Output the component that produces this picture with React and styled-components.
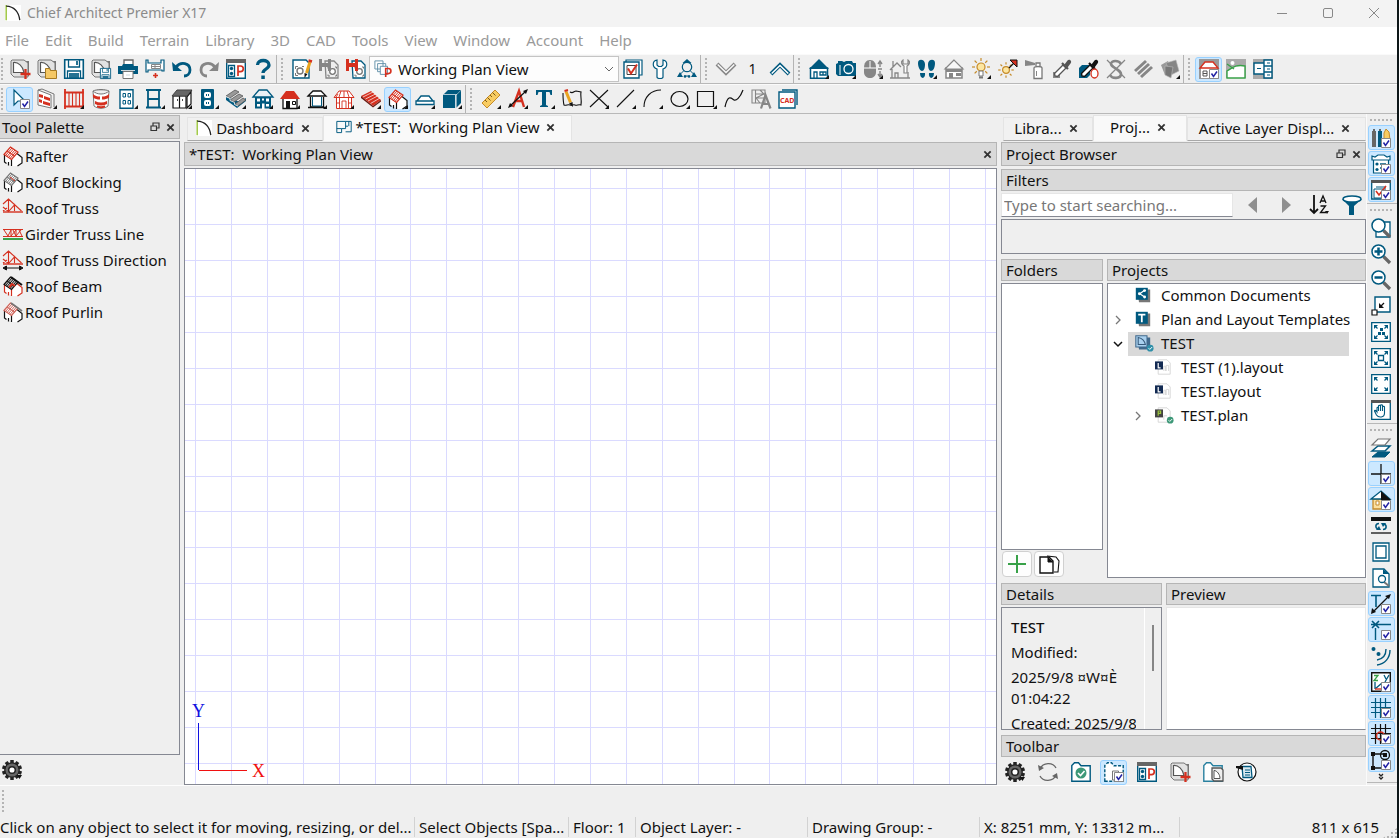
import React from "react";
import styled, { createGlobalStyle, css } from "styled-components";

const C = {
  face: "#efefef",
  head: "#d9d9d9",
  headLine: "#b5b5b5",
  line: "#858892",
  blue: "#00597f",
  red: "#d5301f",
  gray: "#868686",
  ink: "#111111",
  green: "#38a148",
  active: "#cce8ff",
  activeLine: "#99d1ff",
};

const Global = createGlobalStyle`
  * { box-sizing: border-box; }
  body { margin: 0; }
  body, button, input, select {
    font-family: "Noto Sans", "Open Sans", sans-serif;
    font-size: 15px;
    line-height: 20px;
    color: #111;
  }
  button { padding: 0; border: 0; background: none; }
  h2, p, ul { margin: 0; padding: 0; font-weight: 400; font-size: 15px; }
  ul { list-style: none; }
`;

/* ---------- icons (20 x 20 grid) ---------- */

const B = C.blue, R = C.red, G = C.gray, K = C.ink;

const House = ({ roof, wall, fill = "#fff" }) => (
  <>
    <path d="M3 9v10.500h14V9" fill={fill} stroke={wall} strokeWidth="1.300" />
    <path d="M0 10 6 2h8l6 8z" fill={roof} />
  </>
);
const RoofFrame = ({ c = R, k = K, fill = "#fff" }) => (
  <>
    <path d="M1.500 9v6.500l7 4V13zM9 13l4.500-6L19 11v6l-5 3H9z" fill="#fff" />
    <path d="M1.500 9v7l2 1.500M8.500 13v7M14 7.500l5 4V17l-4.500 3M5.500 16v3.500" fill="none" stroke={k} strokeWidth="1.200" />
    <path d="M1 8.500 7.500 1 15 6 8.500 13.500z" fill={fill} stroke={c} strokeWidth="1.200" />
    <path d="M2.500 9.500 9 2M4 10.500 10.500 3M5.500 11.500 12 4M7 12.500 13.500 5M4 5l7.500 5" stroke={c} />
  </>
);
const Page = ({ light = "#e2e2e2" }) => (
  <>
    <path d="M4 2h15v15H5z" fill="#777" />
    <path d="M2 1h12l4 3v14H4l-3-3V2z" fill={light} stroke="#777" />
    <path d="M3.500 13.500v-10C8 3 13 7 14 13.500z" fill="#fff" stroke="#555" strokeWidth="1.200" />
  </>
);
const Disk = ({ x = 0, y = 0, s = 1 }) => (
  <g transform={`translate(${x} ${y}) scale(${s})`}>
    <path d="M.7.7h18.600v18.600H.7z" fill="#fff" stroke={B} strokeWidth="1.600" />
    <path d="M4.500 1v7h11V1M3.500 19v-7h13v7" fill="none" stroke={B} strokeWidth="1.300" />
    <path d="M12 2h2v4h-2zM5 14h10v5H5z" fill={B} opacity=".85" />
  </g>
);
const MiniDisk = ({ c }) => (
  <path d="M0 0h3v4h6V0h3v12H9V8H3v4H0z" fill={c} />
);
const MiniGear = () => (
  <>
    <circle cx="13.500" cy="12.500" r="2.800" fill="#fff" stroke="#777" strokeWidth="1.300" />
    <path d="M9 9.500V8h2M16 8h1.500v1.500M9 15.500V17h2M16 17h1.500v-1.500" fill="none" stroke="#777" />
  </>
);
const Folder = ({ c = "#f5c865", s = "#a67a22" }) => (
  <path d="M8.500 9.500h4l1 2h6v8h-11z" fill={c} stroke={s} />
);
const Lens = ({ children }) => (
  <>
    <path d="M12.500 12.500 19 19" stroke="#666" strokeWidth="3.200" />
    <circle cx="7.500" cy="7.500" r="6.500" fill="#fff" stroke={B} strokeWidth="1.500" />
    {children}
  </>
);
const Corners = () => (
  <>
    <path d="M.7.7h18.600v18.600H.7z" fill="#fff" stroke={B} strokeWidth="1.300" />
    <path d="M3 3h4L3 7zM17 3h-4l4 4zM3 17h4l-4-4zM17 17h-4l4-4z" fill={B} />
    <path d="M4 4l2.500 2.500M16 4l-2.500 2.500M4 16l2.500-2.500M16 16l-2.500-2.500" stroke={B} strokeWidth="1.200" />
  </>
);
const Dropper = ({ c = "#555" }) => (
  <>
    <path d="M3 17l-.5-2.500L11 6l3 3-8.500 8.500z" fill="#fff" stroke={c} strokeWidth="1.300" />
    <path d="M10 4l6 6" stroke={c} strokeWidth="2.200" />
    <path d="M12.500 5.500l3-4c2-2 5 1 3 3l-3 4z" fill={c} />
  </>
);
const PBox = () => (
  <>
    <path d="M.7.7h18.600v18.600H.7z" fill="#fff" stroke={B} strokeWidth="1.400" />
    <path d="M0 0h20v4H0z" fill="#666" />
    <path d="M2.500 6.500h6v11h-6z" fill="#fff" stroke={B} strokeWidth="1.300" />
    <circle cx="5.500" cy="9.500" r="1.700" fill={B} /><circle cx="5.500" cy="14.500" r="1.700" fill={B} />
    <path d="M12 17V7h2.500a2.800 2.800 0 0 1 0 5.600H12" fill="none" stroke={R} strokeWidth="1.700" />
  </>
);
const Sun = ({ cx = 10, cy = 9, r = 4 }) => (
  <>
    <g stroke="#c58b2a" strokeWidth="1.200">
      {[0, 45, 90, 135, 180, 225, 270, 315].map((a) => (
        <path key={a} d={`M${cx + r + 2} ${cy}h${r - 1}`} transform={`rotate(${a} ${cx} ${cy})`} />
      ))}
    </g>
    <circle cx={cx} cy={cy} r={r} fill="#fde6a0" stroke="#c58b2a" strokeWidth="1.200" />
  </>
);
const Truss = ({ dir }) => (
  <>
    <path d="M0 6 5.500 1l13 12M5.500 1v12M0 9l5.500 4.500 6-6.500v6M0 13l4-3" fill="none" stroke={R} strokeWidth="1.100" />
    <path d="M0 14h20" stroke={R} strokeWidth="1.400" />
    {dir && <path d="M2 18h16M0 18l3.500-2v4zM20 18l-3.500-2v4z" stroke={K} fill={K} strokeWidth="1" />}
  </>
);
const Grid = ({ c }) => (
  <path d="M4.500 0v20M9.500 0v20M14.500 0v20M0 4.500h20M0 9.500h20M0 14.500h20" stroke={c} strokeWidth="1.200" />
);
const Gear = () => (
  <>
    <g stroke="#222" strokeWidth="3.500">
      {[0, 36, 72, 108, 144].map((a) => <path key={a} d="M10 0v20" transform={`rotate(${a} 10 10)`} />)}
    </g>
    <circle cx="10" cy="10" r="7.200" fill="#666" stroke="#222" strokeWidth="1.300" />
    <circle cx="10" cy="10" r="3.300" fill="#fff" stroke="#222" strokeWidth="1.500" />
    <path d="M15 15h5l-2.500 4z" fill="#111" />
  </>
);
const ProjFolder = ({ dash, c = B }) => (
  <path d="M.8 19.200V3.500L3.500.8h4l2.500 3h9.200v15.400z" fill="#fff" stroke={c} strokeWidth="1.400" strokeDasharray={dash ? "3 1.500" : undefined} />
);

const ICONS = {
  logo: <><path d="M0 0h20v20H0z" fill="#fff" /><path d="M1.500 0v19" stroke="#9bc53d" strokeWidth="1.800" /><path d="M1.500 1.500C11 2 17 8 18.500 19" fill="none" stroke="#222" strokeWidth="1.600" /></>,
  newPlan: <><Page /><path d="M15.500 10v10M10.500 15h10" stroke={R} strokeWidth="2.300" /></>,
  open: <><Page /><Folder /></>,
  save: <Disk />,
  saveAs: <><Page /><Disk x={9} y={9} s={0.55} /></>,
  print: <><path d="M6 6V1h9v5" fill="#fff" stroke="#666" strokeWidth="1.300" /><path d="M0 7h4l1-2h10l1 2h4v8H0z" fill={B} /><path d="M5 12.500h10v7H5z" fill="#fff" stroke="#777" /><path d="M3 11.500h14M8 16h4" stroke="#ccd8de" /></>,
  sendLayout: <><path d="M1 1h2v3h13V1h3v11h-2v-1H3v2H1z" fill="#fff" stroke={B} strokeWidth="1.200" /><path d="M6.500 5.500h9v4h-9zM10 5.500v4M6.500 7.500h9" fill="none" stroke={G} /><path d="M10.500 14v5M8 16.500h5" stroke={R} strokeWidth="1.600" /></>,
  undo: <><path d="M4 8C9 2 18 4 18 11c0 4-3 6-6 6" fill="none" stroke={B} strokeWidth="2.800" /><path d="M0 3l1 9h9z" fill={B} /></>,
  redo: <><path d="M16 8C11 2 2 4 2 11c0 4 3 6 6 6" fill="none" stroke={G} strokeWidth="2.800" /><path d="M20 3l-1 9h-9z" fill={G} /></>,
  pBox: <PBox />,
  help: <><path d="M4.500 6C4.500 0 16 0 16 6c0 4-6 4-6 8" fill="none" stroke={B} strokeWidth="3.300" /><path d="M8.300 16.500h3.500V20H8.300z" fill={B} /></>,
  pencilGear: <><path d="M1 1h13l3 3v15H1z" fill="#fff" stroke={B} strokeWidth="1.400" /><circle cx="8" cy="12" r="3" fill="none" stroke="#777" strokeWidth="1.400" /><path d="M3.500 10V7.500H6M3.500 14v2.500H6M10 7.500h2" stroke="#777" fill="none" /><path d="M18 3 14.500 14" stroke="#e9a41f" strokeWidth="3" /><path d="M12.500 14l3 1-3 4z" fill={K} /><path d="M16.500 1.500l3.500 1" stroke={R} strokeWidth="2.600" /></>,
  saveGear: <><path d="M6 2h9l4 4v13H7z" fill="#eee" stroke={G} strokeWidth="1.300" /><MiniGear /><MiniDisk c={G} /></>,
  saveGearRed: <><path d="M6 2h9l4 4v13H7z" fill="#fff" stroke={B} strokeWidth="1.300" /><MiniGear /><MiniDisk c={R} /></>,
  views: <><path d="M1 1h9v9H1zM4 4h9v9H4z" fill="#fff" stroke="#5b8ca6" /><path d="M7 7h8v9H7z" fill="#fff" stroke="#5b8ca6" /><path d="M13 19V9.500h3a2.800 2.800 0 0 1 0 5.600h-3" fill="none" stroke={R} strokeWidth="1.800" /></>,
  checkBox: <><path d="M3 1h16v15H3z" fill="#fff" stroke={B} strokeWidth="1.200" /><path d="M1 3h15v16H1z" fill="#fff" stroke={B} strokeWidth="1.400" /><path d="M4 6.500h9v9H4z" fill="none" stroke="#444" /><path d="M5 9.500l3 5 6-9" fill="none" stroke={R} strokeWidth="2" /></>,
  wrench: <path d="M7 1C2 2 2 8 7 10v8c0 2 6 2 6 0v-8c5-2 5-8 0-9v5l-1.500 1.500h-3L7 6z" fill="#fff" stroke={B} strokeWidth="1.200" />,
  network: <><circle cx="10" cy="8" r="4.700" fill="none" stroke={B} strokeWidth="1.200" /><path d="M10 0l4.500 4h-9z" fill={B} /><path d="M6.500 12l-3 3M13.500 12l3 3M7 17h6" stroke={B} /><path d="M3 13l3 5H0zM17 13l3 5h-6z" fill={B} /><circle cx="8" cy="17.500" r="1.300" fill={B} /><circle cx="12" cy="17.500" r="1.300" fill={B} /></>,
  chevDown: <><path d="M1 5l9 9 9-9" stroke={G} strokeWidth="4" fill="none" /><path d="M1.700 5.500 10 13.500l8.300-8" stroke="#f8f8f8" strokeWidth="1.500" fill="none" /></>,
  chevUp: <><path d="M1 15l9-9 9 9" stroke={B} strokeWidth="4" fill="none" /><path d="M1.700 14.500 10 6.500l8.300 8" stroke="#fff" strokeWidth="1.500" fill="none" /></>,
  camHouse: <><path d="M1.500 9h17v10.300h-17z" fill="#fff" stroke={B} strokeWidth="1.500" /><path d="M0 10 10 0l10 10z" fill={B} /><path d="M5 19v-6h3v6M11 13h6v3h-6zM14 13v3" fill="none" stroke={B} strokeWidth="1.300" /></>,
  camera: <><path d="M0 5l2-1V2h4l2 1 2-1h6l1 2h3v13H2l-2-2z" fill={B} /><circle cx="12.500" cy="10" r="4.500" fill={B} stroke="#fff" strokeWidth="1.300" /><path d="M4 6v10" stroke="#fff" /></>,
  mouse: <><path d="M1 9C1 4 3 1 7 1s6 3 6 8v4c0 8-12 8-12 0z" fill={G} /><path d="M1 9h12M7 2v7" stroke="#fff" /><path d="M17 3v5M17 12v5M15 5l2-3 2 3M15 15l2 3 2-3M15 10h4" fill="none" stroke={G} strokeWidth="1.400" /></>,
  houseTool: <><path d="M2 10v9h16v-6M0 11l7-7 4 4M5 19v-5h3v5M3 2v6M0 19h20" fill="none" stroke={G} strokeWidth="1.300" /><path d="M13 1c-3 2-1 5 1 6v7h3V7c2-1 4-4 1-6v4h-5z" fill="#fff" stroke={G} strokeWidth="1.200" /></>,
  feet: <path d="M1 4C1-1 8 0 8 5c0 4-1 7-3 7S1 8 1 4zM11 5c0-5 7-6 7-1s-2 8-4 8-3-3-3-7zM3 14h5c1 6-5 7-5 0zM12 14h5c0 7-6 6-5 0z" fill={B} />,
  grayHouse: <><path d="M2 9h16v10H2z" fill="#fff" stroke={G} strokeWidth="1.500" /><path d="M10 1 1 10h18z" fill="#f8f8f8" stroke={G} strokeWidth="1.200" /><path d="M2 10h16v3H2zM5 14h4v5H5zM12 14h5v3h-5z" fill={G} /></>,
  bulb: <><Sun cy={8} /><path d="M8 12h4v5H8z" fill="#fff" stroke="#777" /><path d="M8 18.500h4" stroke="#777" strokeWidth="2" /></>,
  sunArrow: <><Sun cx={8} cy={11} r={3.4} /><path d="M11 9 16 4" stroke={K} strokeWidth="1.300" /><path d="M12 1h7v7z" fill={R} stroke={K} /></>,
  spray: <><path d="M9 9c0-2 8-2 8 0v10.500H9zM11 7V4h4v3" fill="#fff" stroke="#777" strokeWidth="1.300" /><path d="M11.500 12v5" stroke={G} /><path d="M0 1l10 3v2L0 7z" fill={G} /></>,
  dropper: <><path d="M1 13h7v6H1z" fill={G} /><Dropper /></>,
  dropperBlue: <><path d="M0 9l3-3h8v10l-3 3H0z" fill={B} /><Dropper c={K} /><ellipse cx="15.500" cy="14.500" rx="3.500" ry="4.500" fill="#fff" stroke={R} strokeWidth="1.300" /></>,
  noSpray: <><path d="M15 5C13 1 5 1 5 5s10 5 10 10-9 5-11 1" fill="none" stroke={G} strokeWidth="2.600" /><path d="M1 1l18 18M19 1 1 19" stroke={G} strokeWidth="1.200" /></>,
  planks: <path d="M1 11 12 1l2 2L3 13zM4 14 15 4l2 2L6 16zM7 17 18 7l2 2L9 19z" fill={G} />,
  cards: <><path d="M1 6l7-4 3 10-6 4z" fill="#999" /><path d="M6 4l10-3 3 11-8 4z" fill={G} stroke="#bbb" strokeWidth=".6" /><path d="M5 7l8 1-2 11-6-3z" fill="#777" stroke="#bbb" strokeWidth=".6" /></>,
  house3d: <><path d="M0 0h20v20H0z" fill="#999" /><path d="M2 9h16v10H2z" fill="#fff" /><path d="M6 3h8l5 6H1z" fill="#fff" stroke={R} strokeWidth="1.400" /><path d="M4 12h4v5H4zM4 14.500h4" fill="none" stroke="#555" /></>,
  landscape: <><path d="M0 0h20v19H0z" fill="#aaa" /><circle cx="6.500" cy="4" r="2" fill="#fff" /><path d="M1 12C6 9 10 5 19 7v12H1z" fill="#fff" stroke={C.green} strokeWidth="1.400" /><path d="M1 5l7 5" stroke={C.green} strokeWidth="1.300" /></>,
  panels: <><path d="M0 0h20v20H0z" fill="#aaa" /><path d="M1 4h10v11H1zM11 1h8v18h-8zM11 7h8M11 13h8" fill="#fff" stroke={B} strokeWidth="1.400" /><path d="M4 9.500h4M14 4h3M14 10h3M14 16h3" stroke={B} strokeWidth="1.200" /></>,

  pointer: <path d="M4 1v15l4-4h7z" fill="#fff" stroke={B} strokeWidth="1.200" />,
  brick: <><path d="M1 1l13 5v13L1 16z" fill="#fff" stroke="#777" /><path d="M2 5l4 1v3L2 8zM7 7l6 2v3L7 10zM2 10l3 1v3l-3-1zM6 12l7 2v3l-7-2z" fill={R} /><path d="M1 1l4-1 12 5v13" fill="none" stroke="#777" /></>,
  fence: <><path d="M0 3.500h20M0 17.500h20M1 0v20M19 0v20" stroke={R} strokeWidth="1.800" /><path d="M5 4v13M8.500 4v13M12 4v13M15.500 4v13" stroke={R} strokeWidth="1.100" /></>,
  curveWall: <><path d="M2 2c4 4 12 4 16 0l-1 15c-4 3-10 3-14 0z" fill="#fff" stroke="#777" /><path d="M2 5c2 2 4 2.500 7 2.500v3c-3 0-5-.5-7-2zM11 7.500c3 0 5-.5 7-2.500v3.500c-2 1.500-4 2-7 2zM4 12c4 2 8 2 12 0v3c-4 2-8 2-12 0z" fill={R} /><path d="M6 16.500c3 1 5 1 8 0v2c-3 1-5 1-8 0z" fill={R} /><path d="M2 2c4-2 12-2 16 0" stroke="#777" fill="#ccc" /></>,
  door: <><path d="M2 .7h13v18.600H2z" fill="#fff" stroke={B} strokeWidth="1.400" /><path d="M5 4.500h2.500V8H5zM10 4.500h2.500V8H10zM5 11.500h2.500V15H5zM10 11.500h2.500V15H10z" fill="none" stroke={B} /></>,
  window: <path d="M1 1h15M3 10h11M1 18.500h15M3 1v18M14 1v18" stroke={B} strokeWidth="1.800" fill="none" />,
  cabinet: <><path d="M1 7h13v12H1zM7.500 7v12" fill="#fff" stroke={K} strokeWidth="1.200" /><path d="M0 7l5-6h15l-5 6z" fill="#666" stroke="#444" /><path d="M15 8l4-5v12l-4 4z" fill="#fff" stroke={K} strokeWidth="1.200" /><path d="M5 11h1M10 11h1" stroke={K} strokeWidth="1.300" /></>,
  outlet: <><rect x="2" y="0" width="13" height="20" rx="1" fill={B} /><rect x="5" y="3" width="7" height="6" rx="2" fill="#fff" /><rect x="5" y="11" width="7" height="6" rx="2" fill="#fff" /><path d="M7.500 5v2M9.500 5v2M7.500 13v2M9.500 13v2" stroke={B} /></>,
  stairs: <><path d="M0 8v3l11 8 9-7V9l-6 4z" fill={B} /><path d="M0 7 9 1l4 2-9 6zM4 11l9-6 4 2-9 6zM9 15l8-6 3 2-8 6z" fill="#999" stroke="#555" strokeWidth=".8" /><path d="M0 7.500l4 2v2l4.500 2v2L12 17" stroke="#fff" fill="none" strokeWidth=".8" /></>,
  home1: <><path d="M2 7h16v12.500H2z" fill={B} /><path d="M0 8 6 1h8l6 7z" fill="#e9f1f5" stroke={B} strokeWidth="1.300" /><path d="M4 9.500h3v3H4zM13 9.500h3v3h-3zM4 15h3v2.500H4zM13 15h3v2.500h-3zM9 14.500h2.500V20H9zM9 9.500h2v2H9z" fill="#fff" /></>,
  home2: <><House roof={R} wall={K} /><path d="M6 12h4v7H6z" fill={K} /><path d="M12.500 12.500h3v3h-3z" fill="none" stroke={K} /></>,
  home3: <><path d="M3.500 8v10h13V8" fill="#fff" stroke={K} strokeWidth="1.300" /><path d="M1 7l5-5h8l5 5z" fill="#fff" stroke={K} strokeWidth="1.300" /><path d="M5.500 8v9h9V8" fill="none" stroke={B} /><path d="M1 18.500h17" stroke={K} strokeWidth="1.500" /></>,
  home4: <><path d="M2.500 8.500h15v11h-15zM0 8.500l5-6.500h10l5 6.500z" fill="#fff" stroke={R} /><path d="M5.500 9v10M14.500 9v10M8 12v7M12 12v7M8 12h4M4 5l-2 3M7 2 5 8M10 2v6M13 2l2 6M2 14h4M14 14h4" stroke={R} strokeWidth=".9" /></>,
  slab: <><path d="M0 7 10 2l10 9-8 6z" fill={R} /><path d="M2 8l10-5M4.500 10l10-5M7 12l9.500-5M9.500 14.500 19 9" stroke="#fff" strokeWidth=".7" /><path d="M0 7v2l12 9.500 8-6V11l-8 6z" fill="#6b1b14" /></>,
  rafter: <RoofFrame />,
  couch: <path d="M1 15.500h18V12H1zM2 12l4-5h8l4 5" fill="#fff" stroke={B} strokeWidth="1.300" />,
  box: <><path d="M1 6h12v13H1zM2 5l4-4h13l-4 4zM14.500 6l4.500-4.500V14l-4.500 4.500z" fill={B} /><path d="M1 5.500h13V19" stroke="#8fb8ca" strokeWidth=".7" fill="none" /></>,
  ruler: <><path d="M1 14 14 1l5 5L6 19z" fill="#f8cc62" stroke="#c58b2a" /><path d="M4 11l2 2M6.500 8.500l3 3M9 6l2 2M11.500 3.500l3 3" stroke="#7a5a1a" /></>,
  textA: <><path d="M5 18 11 2l5 16M8 12h7" fill="none" stroke={R} strokeWidth="2.400" /><path d="M2 17 18 2" stroke={K} strokeWidth="1.200" /><path d="M0 19l2-5 3 3zM20 0l-5 2 3 3z" fill={K} /></>,
  textT: <path d="M1 1h16v5h-1.500l-1-3H11v13l2 1v1H5v-1l2-1V3H3.500l-1 3H1z" fill={B} />,
  callout: <><path d="M8 3c3 2 4-1 6-1l5 1c-1 4 1 7 0 13-3-1-4 1-6 0s-3 1-5 0-4 1-6 0C1 12 1 8 1 4" fill="none" stroke={K} strokeWidth="1.100" /><path d="M4 2.500l4.500 11" stroke="#e9a41f" strokeWidth="3" /><path d="M7 14.500l3.500-1.500.5 5z" fill={K} /><path d="M2.500 2l3.500-1" stroke={R} strokeWidth="2" /></>,
  cross: <path d="M1 1l18 17M19 1 1 18" stroke={K} strokeWidth="1.100" />,
  lineSeg: <path d="M1 18 18 1" stroke={K} strokeWidth="1.100" />,
  arc: <path d="M1 18C1 8 8 1 18 1" stroke={K} strokeWidth="1.100" fill="none" />,
  circle: <ellipse cx="9.500" cy="10" rx="8.500" ry="7.500" stroke={K} strokeWidth="1.200" fill="none" />,
  rect: <path d="M.5 2.500h16v15H.5z" stroke={K} strokeWidth="1.200" fill="none" />,
  spline: <path d="M1 18C4 4 8 10 10 11s6-2 9-10" stroke={K} strokeWidth="1.200" fill="none" />,
  truss3: <><path d="M1 1h13v13H1zM4.500 1v13M4.500 5h9M4.500 9h9M9 1l4 4-8 4 4 5" fill="none" stroke={G} strokeWidth="1.100" /><path d="M10 19.500 14.500 6l5 13.500M12 15h6" fill="none" stroke={G} strokeWidth="2.200" /></>,
  cad: <><path d="M4 1h15v15" fill="#fff" stroke={B} strokeWidth="1.400" /><path d="M1 3h16v16H1z" fill="#fff" stroke={B} strokeWidth="1.400" /><text x="2" y="14" fontSize="7" fontWeight="700" fill={R}>CAD</text></>,

  blocking: <><RoofFrame c="#777" /><path d="M7 5l5 4" stroke={R} /></>,
  truss: <Truss />,
  girder: <><path d="M0 5.500h20M0 12.500h20M1 6l4 6 3-6v6l5-6v6M10 6l3 6 5-6M16 6l3 6" stroke={R} strokeWidth="1" fill="none" /><path d="M0 15h20" stroke={C.green} strokeWidth="2" /></>,
  trussDir: <Truss dir />,
  beam: <><RoofFrame k={R} c={K} fill="#c9c9c9" /><path d="M6 11.500l3-3.500 3 2" stroke={R} strokeWidth="2" fill="none" /><path d="M8 1l11 8" stroke={K} strokeWidth="2" /></>,
  purlin: <><RoofFrame c="#cf6258" /><path d="M8 1l11 8" stroke="#777" strokeWidth="1.600" /></>,
  gear: <Gear />,
  planTab: <path d="M1 3h11v9H7v5H1zM12 3h7v13h-7M12 9h3M1 12h6M16 3v6" fill="none" stroke={B} strokeWidth="1.200" />,
  restore: <path d="M6 7V2h12v10h-5M2 8h11v9H2z" fill="none" stroke="#333" strokeWidth="2.400" />,
  close: <path d="M3 3l14 14M17 3 3 17" stroke="#333" strokeWidth="4" />,

  prev: <path d="M14 2v16L5 10z" fill="#8f8f8f" />,
  next: <path d="M6 2v16l9-8z" fill="#8f8f8f" />,
  sort: <><path d="M5 0v18M1 14l4 4 4-4" fill="none" stroke={K} strokeWidth="1.800" /><path d="M11 8l3-7 3 7M12 6h4M11.500 11h5l-5 6.500h5.500" fill="none" stroke={K} strokeWidth="1.300" /><path d="M16 16h4l-2 3z" fill={K} /></>,
  funnel: <><path d="M0 4l7 7v9h5v-9l8-7z" fill={B} /><ellipse cx="10" cy="4" rx="9" ry="3" fill="#fff" stroke={B} strokeWidth="1.500" /></>,
  plus: <path d="M10 1v18M1 10h18" stroke={C.green} strokeWidth="2" />,
  copy: <><path d="M8 2l9 1 3 4-1 11h-4" fill="none" stroke={K} strokeWidth="1.100" /><path d="M1 3h9l4 4v12H1z" fill="#fff" stroke={K} strokeWidth="1.400" /><path d="M9 3v5h5" fill={K} stroke={K} /></>,
  refresh: <><path d="M2 7C5 0 15 0 18 6M18 13c-3 7-13 7-16 1" fill="none" stroke="#666" strokeWidth="1.300" /><path d="M0 3l1 6 5-3zM20 17l-1-6-5 3z" fill="#666" /></>,
  folderOk: <><ProjFolder /><circle cx="10" cy="11" r="5.500" fill="#3d9878" /><path d="M7 11l2.500 2.500L13.500 9" fill="none" stroke="#fff" strokeWidth="1.600" /></>,
  folderDash: <><ProjFolder dash /><path d="M8.500 9h6v9h-6z" fill="none" stroke="#777" /></>,
  folderPage: <><ProjFolder c="#29809f" /><path d="M9 6h9l2 2v11h-9l-2-2z" fill="#eee" stroke="#555" strokeWidth="1.300" /><path d="M11 8.500v8h6c0-4-3-8-6-8z" fill="#fff" stroke="#555" /></>,
  history: <><circle cx="11" cy="10" r="9" fill="#fff" stroke={K} strokeWidth="1.200" /><path d="M6 4.500h9l1 11H7z" fill="#d8e8ef" stroke={B} strokeWidth="1.300" /><path d="M9 8h5M9 10.500h5M9 13h5" stroke={B} strokeWidth="1.200" /><path d="M0 4h7v4L0 6z" fill={K} /></>,

  share: <><path d="M3 3h16v16H5z" fill="#777" /><path d="M1 1h15v15H1z" fill={B} /><path d="M12 4 6 8.500l6 4" stroke="#fff" strokeWidth="1.500" fill="none" /><circle cx="12" cy="4.500" r="1.800" fill="#fff" /><circle cx="5.500" cy="8.500" r="1.800" fill="#fff" /><circle cx="12" cy="12.500" r="1.800" fill="#fff" /></>,
  template: <><path d="M3 3h16v16H5z" fill="#777" /><path d="M1 1h15v15H1z" fill={B} /><path d="M4 4.500h9M8.500 4v10" stroke="#fff" strokeWidth="2.200" /></>,
  project: <><path d="M3 3h16v15H5z" fill="#41698c" /><path d="M1 1h14v14H1z" fill="#a9d0ee" stroke="#41698c" strokeWidth="1.300" /><path d="M4 3v9h9C12 7 9 4 4 3z" fill="none" stroke="#36597a" strokeWidth="1.300" /></>,
  layoutFile: <><path d="M4 1h11l4 4v14H4z" fill="#fff" stroke="#cfcfcf" /><path d="M11 15V9h2v6M14 15V8h3v7" fill="none" stroke="#d0d0d0" /><path d="M0 3h10v10H0z" fill="#122a52" /><path d="M4 5v6h3" fill="none" stroke="#fff" strokeWidth="1.500" /></>,
  planFile: <><path d="M4 1h11l4 4v14H4z" fill="#fff" stroke="#cfcfcf" /><path d="M11 16v-5h4" fill="none" stroke="#d0d0d0" /><path d="M0 3h10v10H0z" fill="#444" /><path d="M4 11V5h3v3H4" fill="none" stroke="#9bc53d" strokeWidth="1.500" /></>,

  books: <><path d="M1 3h4v16H1z" fill="#666" /><path d="M7 3h4v16H7z" fill={B} /><path d="M2 1h2v2H2zM8 1h2v2H8z" fill="#666" /><path d="M13 5l2-4 3 3 1 8h-6z" fill="#f8cc62" stroke="#c58b2a" /></>,
  optionList: <><path d="M2.500 4h15v15h-15z" fill="#fff" stroke={B} strokeWidth="1.200" /><path d="M1 6V2l3 1 3-2h6l3 2 3-1v4z" fill="#fff" stroke={B} strokeWidth="1.200" /><circle cx="6" cy="10" r="1.600" fill={B} /><circle cx="6" cy="15.500" r="1.600" fill={B} /><path d="M9 10h6M9 14h3" stroke={B} strokeWidth="1.400" /></>,
  layerCheck: <><path d="M.7 1h18.600v18H.7z" fill="#fff" stroke={B} strokeWidth="1.300" /><path d="M0 0h20v3H0z" fill="#555" /><path d="M3 9h9v9H3zM5 7h9v9" fill="none" stroke={B} /><path d="M5 11l3 4 7-9" stroke={R} strokeWidth="1.600" fill="none" /></>,
  zoomWin: <><path d="M5 4h14v15H5z" fill="#fff" stroke={B} strokeWidth="1.300" /><Lens /></>,
  zoomIn: <Lens><path d="M7.500 3.500v8M3.500 7.500h8" stroke={B} strokeWidth="2.500" /></Lens>,
  zoomOut: <Lens><path d="M3.500 7.500h8" stroke={B} strokeWidth="2.500" /></Lens>,
  fitOne: <><path d="M4 1h15v15H4z" fill="#fff" stroke={B} strokeWidth="1.400" /><path d="M8 7v5h5z" fill={K} /><path d="M10 10l3-3" stroke={K} strokeWidth="1.200" /><path d="M1 14h5v5H1z" fill="#fff" stroke={K} strokeWidth="1.200" /></>,
  fitDots: <><Corners /><path d="M9 6h3v3H9zM11 10h3v3h-3zM7 10h3v3H7z" fill={B} /></>,
  fitBox: <><Corners /><path d="M7.500 7.500h5v5h-5z" fill="#fff" stroke={B} strokeWidth="1.300" /></>,
  fitAll: <Corners />,
  hand: <><path d="M.7.7h18.600v18.600H.7z" fill="#fff" stroke={B} strokeWidth="1.300" /><path d="M0 0h20v3H0z" fill="#555" /><path d="M6 12V8c0-1 1.500-1 1.500 0V6c0-1 2-1 2 0v-.5c0-1 2-1 2 0V7c0-1 2-1 2 0v6c0 5-6 5-8 2l-2-4c0-1 1-1 2.500 1zM7.500 8v3M9.500 6v5M11.500 7v4" fill="#fff" stroke={B} strokeWidth="1.100" /></>,
  layers: <><path d="M1 19l6-5h12l-5 5z" fill={B} stroke={B} /><path d="M1 13l6-5h12l-5 5z" fill="#fff" stroke={B} strokeWidth="1.500" /><path d="M1 7l6-6h12l-5 6z" fill="#fff" stroke="#777" strokeWidth="1.200" /></>,
  crossHair: <path d="M10 0v20M0 10h20" stroke={K} strokeWidth="1.300" />,
  colorHouse: <><path d="M2 9h9v10H2z" fill="#fbe0a0" stroke="#c58b2a" strokeWidth="1.300" /><path d="M5 11h3v4H5z" fill="#fff" stroke="#c58b2a" /><path d="M0 9 10 1l9 8z" fill="#fff" stroke={B} strokeWidth="1.300" /><path d="M10 1l10 9H10z" fill={K} /></>,
  refreshView: <><path d="M0 3h20" stroke={K} strokeWidth="4" /><path d="M0 17h20" stroke={K} strokeWidth="1.300" /><path d="M8 7.500C4 7.500 4 12 7 13M12 13.500c4 0 4-4.500 1-5.500" fill="none" stroke={B} strokeWidth="1.500" /><path d="M5 14h5l-2-4zM15 7h-5l2 4z" fill={B} /></>,
  sheet: <path d="M2 1h16v18H2zM5 4h10v12H5z" fill="#fff" stroke={B} strokeWidth="1.300" />,
  pageZoom: <><path d="M2 1h11l5 5v13H2z" fill="#fff" stroke={B} strokeWidth="1.300" /><path d="M12 1l6 5h-6z" fill={B} /><path d="M13 14l5 4" stroke="#777" strokeWidth="2" /><circle cx="11" cy="11" r="3.500" fill="#fff" stroke={B} strokeWidth="1.300" /></>,
  textArrow: <><path d="M0 1.500h10M5 1v12" stroke={B} strokeWidth="1.600" /><path d="M2 18 18 2" stroke={K} strokeWidth="1.300" /><path d="M0 20l1-6 4 4zM20 0l-6 2 4 3z" fill={K} /></>,
  snapLine: <><path d="M8 4.500h12M4.500 8v12" stroke={B} strokeWidth="1.400" /><path d="M1 1l7 7M8 1 1 8M0 4.500h8" stroke={B} strokeWidth="1.600" /></>,
  arcs: <><path d="M19 4c0 8-5 14-13 15M15 3c0 6-3 10-9 11" fill="none" stroke={B} strokeWidth="1.400" /><circle cx="2.500" cy="3" r="2" fill={B} /><circle cx="7.500" cy="8" r="2" fill={B} /></>,
  zy: <><path d="M.7.7h18.600v18.600H.7z" fill="#fff" stroke={K} strokeWidth="1.400" /><path d="M3 3.500h4l-4 5h4" fill="none" stroke={C.green} strokeWidth="1.300" /><path d="M13 3l2 4M18 3l-4 7" stroke={B} strokeWidth="1.300" /><path d="M4 10v7M4 17l7-6" stroke={B} strokeWidth="1.300" /><path d="M4 17h6" stroke={R} strokeWidth="1.400" /></>,
  gridBlue: <Grid c={B} />,
  gridSnap: <><Grid c={K} /><circle cx="9.500" cy="12" r="4" fill="none" stroke={R} strokeWidth="1.500" /></>,
  objSnap: <><path d="M2 4h13M2 4v14h8" fill="none" stroke={K} strokeWidth="1.400" /><path d="M0 2h4v4H0zM0 16h4v4H0zM12 3h4v4h-4z" fill={K} /><circle cx="14" cy="5" r="4.500" fill="none" stroke={K} strokeWidth="1.300" /></>,
};

const Svg = styled.svg`
  display: block;
  flex: none;
  width: ${(p) => p.$size}px;
  height: ${(p) => p.$size}px;
  overflow: visible;
`;
function Icon({ name, size = 20, drop, check, badge }) {
  return (
    <Svg $size={size} viewBox="0 0 20 20" fill="none" aria-hidden="true">
      {ICONS[name]}
      {drop && <path d="M20 16v4h-4z" fill={K} />}
      {badge && (
        <>
          <circle cx="19" cy="16.500" r="4.200" fill={badge} />
          <path d="M17 16.500l1.500 1.500 3-3" stroke="#fff" strokeWidth="1.200" />
        </>
      )}
      {check && (
        <>
          <path d="M10.500 10.500h9v9h-9z" fill="#fff" stroke="#888" />
          <path d="M12.500 14.500l2 3 3.500-5" stroke="#2323a5" strokeWidth="1.500" />
        </>
      )}
    </Svg>
  );
}

/* ---------- shell ---------- */

const Shell = styled.div`
  height: 100vh;
  display: flex;
  flex-direction: column;
  overflow: hidden;
  background: ${C.face};
  border-right: 2px solid #0d1618;
`;
const TitleBar = styled.header`
  display: flex;
  align-items: center;
  height: 27px;
  flex: none;
  padding: 0 0 2px 5px;
  gap: 6px;
  background: #f3f3f3;
  color: #8b8b8b;
  font-size: 14px;
`;
const WindowButtons = styled.div`
  display: flex;
  margin-left: auto;
`;
const WindowButton = styled.button`
  width: 46px;
  height: 24px;
  display: grid;
  place-items: center;
`;
const MenuBar = styled.nav`
  display: flex;
  align-items: center;
  gap: 16px;
  height: 27px;
  flex: none;
  padding: 0 0 2px 5px;
  background: #fff;
`;
const MenuItem = styled.button`
  color: #9a9a9a;
`;
const ToolRow = styled.div`
  display: flex;
  flex: none;
  height: 30px;
  border-top: 1px solid #fafafa;
  border-bottom: 1px solid #b8b8b8;
`;
const gripDots = css`
  background-image: radial-gradient(circle at 1px 1px, #b4b4b4 1px, transparent 1px);
  background-size: 4px 4px;
`;
const ToolGroup = styled.div`
  display: flex;
  align-items: center;
  border-right: ${(p) => (p.$last ? "0" : "1px solid #b4b4b4")};
`;
const Grip = styled.span`
  width: 3px;
  height: 22px;
  margin: 0 ${(p) => (p.$first ? 2 : 4)}px 0 ${(p) => (p.$first ? 1 : 4)}px;
  ${gripDots}
`;
const ToolButton = styled.button`
  display: grid;
  place-items: center;
  flex: none;
  width: 27px;
  height: 25px;
  border: 1px solid ${(p) => (p.$active ? C.activeLine : "transparent")};
  border-radius: 3px;
  background: ${(p) => (p.$active ? C.active : "transparent")};
`;
const Floor = styled.span`
  width: 27px;
  text-align: center;
  font-size: 14px;
`;
const ViewPicker = styled.label`
  display: flex;
  align-items: center;
  width: 250px;
  height: 26px;
  padding-left: 4px;
  border: 1px solid #c4c4c4;
  background: #fdfdfd;
`;
const ViewSelect = styled.select`
  appearance: none;
  flex: 1;
  height: 24px;
  padding: 0 0 0 6px;
  border: 0;
  background: transparent;
`;
const Chevron = styled.svg`
  width: 10px;
  height: 6px;
  margin-right: 4px;
`;

function Tool({ icon, label, active, drop, check }) {
  return (
    <ToolButton $active={active} aria-label={label || icon} aria-pressed={active ? true : undefined}>
      <Icon name={icon} drop={drop} check={check || active} />
    </ToolButton>
  );
}
/* A trailing "*" marks a tool with a fly-out, a leading "!" one that is switched on. */
const tools = (list) =>
  list.split(" ").map((n) => {
    const name = n.replace(/[*!]/g, "");
    return <Tool key={n} icon={name} drop={n.endsWith("*")} active={n.startsWith("!")} />;
  });

/* ---------- workspace ---------- */

const Workspace = styled.main`
  flex: 1;
  min-height: 0;
  display: grid;
  grid-template-columns: 180px minmax(0, 1fr) 365px 31px;
`;
const Column = styled.section`
  display: flex;
  flex-direction: column;
  min-width: 0;
  min-height: 0;
  margin-left: ${(p) => p.$left || 0}px;
  margin-right: ${(p) => p.$right || 0}px;
`;
const PaneHeader = styled.div`
  display: flex;
  align-items: center;
  gap: 6px;
  flex: none;
  height: ${(p) => p.$h || 24}px;
  margin: ${(p) => p.$top || 0}px 0 0;
  padding: 0 4px 0 ${(p) => p.$pad ?? 4}px;
  border: 1px solid ${C.headLine};
  border-left-width: ${(p) => (p.$pad === 2 ? 0 : 1)}px;
  background: ${C.head};
`;
const PaneTitle = styled.h2`
  flex: 1;
  white-space: pre;
`;
const SmallButton = styled.button`
  display: grid;
  place-items: center;
`;
const PaletteList = styled.ul`
  flex: 1;
  margin-top: 2px;
  padding-top: 1px;
  border-top: 1px solid ${C.line};
  border-right: 1px solid ${C.line};
  border-bottom: 1px solid ${C.line};
`;
const PaletteItem = styled.button`
  display: flex;
  align-items: center;
  gap: 2px;
  height: 26px;
  padding-left: 3px;
`;
const PaletteFooter = styled.div`
  display: flex;
  align-items: center;
  height: 30px;
  padding-left: 2px;
`;
const Tabs = styled.div`
  display: flex;
  align-items: flex-end;
  flex: none;
  height: 27px;
  padding-left: ${(p) => p.$pad}px;
`;
const Tab = styled.div`
  display: flex;
  align-items: center;
  justify-content: center;
  gap: 7px;
  flex: ${(p) => (p.$w ? `0 0 ${p.$w}px` : "1 1 0")};
  min-width: 0;
  height: ${(p) => (p.$active ? 26 : 24)}px;
  padding: 0 4px 2px 0;
  border: 1px solid #e4e4e4;
  border-bottom-color: ${(p) => (p.$active ? "#f9f9f9" : "#a8a8a8")};
  background: ${(p) => (p.$active ? "#f9f9f9" : "#f1f1f1")};
`;
const TabLabel = styled.button`
  display: flex;
  align-items: center;
  gap: 4px;
  white-space: pre;
`;
const Canvas = styled.div`
  flex: 1;
  min-height: 0;
  margin-top: 2px;
  border: 1px solid ${C.line};
  background: #fff;
`;
const Plan = styled.svg`
  display: block;
  width: 100%;
  height: 100%;
`;

function PlanCanvas() {
  const steps = Array.from({ length: 100 }, (_, i) => i);
  return (
    <Canvas>
      <Plan>
        <g fill="#dadaff" shapeRendering="crispEdges">
          {steps.map((i) => (
            <React.Fragment key={i}>
              <rect x={10 + Math.round(i * 35.9)} y="0" width="1" height="100%" />
              <rect x="0" y={19 + Math.round(i * 35.94)} width="100%" height="1" />
            </React.Fragment>
          ))}
        </g>
        <svg y="100%" overflow="visible" fontFamily="Liberation Serif, serif" fontSize="18">
          <path d="M13.500-61v47" stroke="#1010e0" />
          <path d="M14-13.500h48" stroke="#f01010" />
          <text x="7" y="-67" fill="#1010e0">Y</text>
          <text x="67" y="-7" fill="#f01010">X</text>
        </svg>
      </Plan>
    </Canvas>
  );
}

function HeaderTools() {
  return (
    <>
      <SmallButton aria-label="Float panel"><Icon name="restore" size={10} /></SmallButton>
      <SmallButton aria-label="Close panel"><Icon name="close" size={9} /></SmallButton>
    </>
  );
}

function DocTab({ label, icon, active, w }) {
  return (
    <Tab $active={active} $w={w}>
      <TabLabel role="tab" aria-selected={!!active}>
        {icon && <Icon name={icon} size={16} />}
        {label}
      </TabLabel>
      <SmallButton aria-label={"Close " + label}><Icon name="close" size={9} /></SmallButton>
    </Tab>
  );
}

/* ---------- project browser ---------- */

const SearchRow = styled.div`
  display: flex;
  align-items: center;
  flex: none;
  height: 28px;
  margin-right: -2px;
`;
const SearchInput = styled.input`
  flex: 1;
  min-width: 0;
  height: 24px;
  margin-right: 3px;
  padding: 0 2px;
  border: 1px solid #e6e6e6;
  border-bottom-color: ${C.line};
  background: #fff;
  &::placeholder { color: #777; opacity: 1; }
`;
const WideTool = styled.button`
  display: grid;
  place-items: center;
  flex: none;
  width: 33px;
  height: 26px;
`;
const FilterBox = styled.div`
  flex: none;
  height: 35px;
  border: 1px solid ${C.line};
`;
const Split = styled.div`
  display: grid;
  grid-template-columns: ${(p) => p.$cols};
  gap: 4px;
  flex: ${(p) => (p.$grow ? "1 1 0" : "none")};
  min-height: 0;
  margin-top: 5px;
`;
const Half = styled.div`
  display: flex;
  flex-direction: column;
  min-width: 0;
  min-height: 0;
`;
const ListBox = styled.div`
  flex: 1;
  min-height: 0;
  margin-top: 2px;
  border: 1px solid ${C.line};
  background: #fff;
`;
const FolderButtons = styled.div`
  display: flex;
  gap: 2px;
  height: 28px;
  padding: 1px 0 0 1px;
`;
const FramedButton = styled.button`
  display: grid;
  place-items: center;
  width: 30px;
  height: 26px;
  border: 1px solid #d0d0d0;
  border-radius: 4px;
  background: #fdfdfd;
`;
const TreeRow = styled.li`
  display: flex;
  align-items: center;
  height: 24px;
  padding-left: ${(p) => (p.$level ? 20 : 0)}px;
  margin-right: 16px;
`;
const Twisty = styled.button`
  display: grid;
  place-items: center;
  flex: none;
  width: 19px;
  margin-right: 1px;
  height: 24px;
`;
const TreeLabel = styled.button`
  display: flex;
  align-items: center;
  gap: 10px;
  flex: 1;
  height: 24px;
  padding: 0 0 2px 7px;
  white-space: nowrap;
  background: ${(p) => (p.$selected ? C.head : "transparent")};
`;
const DetailsBox = styled.div`
  display: flex;
  height: 123px;
  margin-top: 2px;
  border: 1px solid ${C.line};
  overflow: hidden;
`;
const DetailsText = styled.div`
  flex: 1;
  min-width: 0;
  padding: 9px 0 0 9px;
  margin-right: 8px;
  overflow: hidden;
`;
const DetailLine = styled.p`
  margin-bottom: 4px;
  line-height: 21px;
  white-space: ${(p) => (p.$wrap ? "normal" : "nowrap")};
  font-weight: ${(p) => (p.$strong ? 500 : 400)};
`;
const ScrollTrack = styled.div`
  width: 17px;
  padding: 17px 0 0 7px;
  border-left: 1px solid #fff;
`;
const ScrollThumb = styled.div`
  width: 2px;
  height: 46px;
  background: #868686;
`;
const PreviewBox = styled.div`
  height: 123px;
  margin-top: 2px;
  border: 1px solid #e6e6e6;
  border-bottom-color: ${C.line};
  background: #fff;
`;
const BrowserTools = styled.div`
  display: flex;
  align-items: center;
  gap: 6px;
  height: 28px;
  padding-top: 2px;
  flex: none;
`;

const TREE = [
  { icon: "share", label: "Common Documents" },
  { icon: "template", label: "Plan and Layout Templates", twisty: "closed" },
  { icon: "project", label: "TEST", twisty: "open", selected: true, badge: "#2f8fa8" },
  { icon: "layoutFile", label: "TEST (1).layout", level: 1 },
  { icon: "layoutFile", label: "TEST.layout", level: 1 },
  { icon: "planFile", label: "TEST.plan", level: 1, twisty: "closed", badge: "#3d9878" },
];

function Tree() {
  return (
    <ul>
      {TREE.map((t) => (
        <TreeRow key={t.label} $level={t.level}>
          <Twisty aria-label="Expand" disabled={!t.twisty}>
            {t.twisty && (
              <Svg $size={10} viewBox="0 0 10 10" fill="none">
                {t.twisty === "open"
                  ? <path d="M1 3l4 4 4-4" stroke="#111" strokeWidth="1.500" />
                  : <path d="M3 1l4 4-4 4" stroke="#777" strokeWidth="1.300" />}
              </Svg>
            )}
          </Twisty>
          <TreeLabel $selected={t.selected}>
            <Icon name={t.icon} size={16} badge={t.badge} />
            {t.label}
          </TreeLabel>
        </TreeRow>
      ))}
    </ul>
  );
}

const SideStrip = styled.aside`
  display: flex;
  flex-direction: column;
  min-height: 0;
  overflow: hidden;
  border-left: 1px solid #fafafa;
`;
const SideGroup = styled.div`
  display: flex;
  flex-direction: column;
  align-items: center;
  gap: 1px;
  padding: 0 2px 1px 0;
  border-bottom: 1px solid #b8b8b8;
`;
const SideGrip = styled.span`
  width: 22px;
  height: 2px;
  margin: 5px 0 3px;
  ${gripDots}
`;

/* ---------- bottom ---------- */

const BottomBar = styled.div`
  flex: none;
  height: 29px;
  padding: 4px 0 0 1px;
  border-top: 1px solid #fdfdfd;
`;
const StatusBar = styled.footer`
  display: flex;
  align-items: center;
  flex: none;
  height: 24px;
  padding-top: 2px;
`;
const Status = styled.span`
  flex: ${(p) => (p.$w ? `0 0 ${p.$w}px` : "1")};
  height: 20px;
  padding: 0 0 0 ${(p) => (p.$first ? 0 : 4)}px;
  border-right: ${(p) => (p.$last ? "0" : "1px solid #d2d2d2")};
  overflow: hidden;
  white-space: nowrap;
  text-overflow: ellipsis;
  text-align: ${(p) => (p.$last ? "right" : "left")};
`;
const SizeGrip = styled.span`
  width: 14px;
  height: 10px;
  align-self: flex-end;
  margin-left: 4px;
  clip-path: polygon(100% 0, 100% 100%, 0 100%);
  ${gripDots}
`;

const MENUS = ["File", "Edit", "Build", "Terrain", "Library", "3D", "CAD", "Tools", "View", "Window", "Account", "Help"];
const PALETTE = [
  ["rafter", "Rafter"], ["blocking", "Roof Blocking"], ["truss", "Roof Truss"], ["girder", "Girder Truss Line"],
  ["trussDir", "Roof Truss Direction"], ["beam", "Roof Beam"], ["purlin", "Roof Purlin"],
];

export default function App() {
  return (
    <Shell>
      <Global />
      <TitleBar>
        <Icon name="logo" size={16} />
        <span>Chief Architect Premier X17</span>
        <WindowButtons>
          <WindowButton aria-label="Minimize"><Svg $size={10} viewBox="0 0 10 10"><path d="M0 5.500h10" stroke="#888" /></Svg></WindowButton>
          <WindowButton aria-label="Maximize"><Svg $size={10} viewBox="0 0 10 10"><rect x=".5" y=".5" width="9" height="9" rx="1.500" fill="none" stroke="#888" /></Svg></WindowButton>
          <WindowButton aria-label="Close"><Svg $size={10} viewBox="0 0 10 10"><path d="M0 0l10 10M10 0 0 10" stroke="#888" /></Svg></WindowButton>
        </WindowButtons>
      </TitleBar>
      <MenuBar>{MENUS.map((m) => <MenuItem key={m}>{m}</MenuItem>)}</MenuBar>

      <ToolRow>
        <ToolGroup>
          <Grip $first />
          {tools("newPlan open save saveAs print sendLayout undo redo pBox help")}
        </ToolGroup>
        <ToolGroup>
          <Grip />
          {tools("pencilGear saveGear saveGearRed")}
          <ViewPicker>
            <Icon name="views" size={18} />
            <ViewSelect aria-label="Saved plan view" defaultValue="w">
              <option value="w">Working Plan View</option>
            </ViewSelect>
            <Chevron viewBox="0 0 10 6" fill="none"><path d="M1 1l4 4 4-4" stroke="#666" /></Chevron>
          </ViewPicker>
          {tools("checkBox wrench network")}
        </ToolGroup>
        <ToolGroup>
          <Grip />
          <Tool icon="chevDown" label="Down one floor" />
          <Floor>1</Floor>
          <Tool icon="chevUp" label="Up one floor" />
        </ToolGroup>
        <ToolGroup>
          <Grip />
          {tools("camHouse* camera* mouse* houseTool feet* grayHouse bulb* sunArrow spray dropper dropperBlue noSpray planks cards*")}
        </ToolGroup>
        <ToolGroup $last>
          <Grip />
          {tools("!house3d landscape panels")}
        </ToolGroup>
      </ToolRow>

      <ToolRow>
        <ToolGroup>
          <Grip $first />
          {tools("!pointer brick* fence* curveWall door* window* cabinet* outlet* stairs* home1* home2* home3* home4* slab*")}
          <ToolButton $active aria-label="Roof framing" aria-pressed="true"><Icon name="rafter" drop /></ToolButton>
          {tools("couch* box*")}
        </ToolGroup>
        <ToolGroup $last>
          <Grip />
          {tools("ruler* textA* textT* callout cross* lineSeg* arc* circle* rect* spline truss3 cad")}
        </ToolGroup>
      </ToolRow>

      <Workspace>
        <Column>
          <PaneHeader $top={1} $pad={2}>
            <PaneTitle>Tool Palette</PaneTitle>
            <HeaderTools />
          </PaneHeader>
          <PaletteList>
            {PALETTE.map(([icon, label]) => (
              <li key={label}><PaletteItem><Icon name={icon} />{label}</PaletteItem></li>
            ))}
          </PaletteList>
          <PaletteFooter><SmallButton aria-label="Palette settings"><Icon name="gear" /></SmallButton></PaletteFooter>
        </Column>

        <Column $left={4} $right={4}>
          <Tabs $pad={3} role="tablist">
            <DocTab label="Dashboard" icon="logo" w={136} />
            <DocTab label="*TEST:  Working Plan View" icon="planTab" active w={249} />
          </Tabs>
          <PaneHeader $top={1}>
            <PaneTitle>*TEST:  Working Plan View</PaneTitle>
            <SmallButton aria-label="Close view"><Icon name="close" size={9} /></SmallButton>
          </PaneHeader>
          <PlanCanvas />
        </Column>

        <Column>
          <Tabs $pad={2} role="tablist">
            <DocTab label="Libra..." w={90} />
            <DocTab label="Proj..." active w={94} />
            <DocTab label="Active Layer Displ..." />
          </Tabs>
          <PaneHeader $top={1}>
            <PaneTitle>Project Browser</PaneTitle>
            <HeaderTools />
          </PaneHeader>
          <PaneHeader $top={3} $h={22}><PaneTitle>Filters</PaneTitle></PaneHeader>
          <SearchRow>
            <SearchInput aria-label="Search projects" placeholder="Type to start searching..." />
            {["prev", "next", "sort", "funnel"].map((n) => (
              <WideTool key={n} aria-label={n}><Icon name={n} /></WideTool>
            ))}
          </SearchRow>
          <FilterBox />
          <Split $grow $cols="102px minmax(0, 1fr)">
            <Half>
              <PaneHeader $h={22}><PaneTitle>Folders</PaneTitle></PaneHeader>
              <ListBox />
              <FolderButtons>
                <FramedButton aria-label="Add folder"><Icon name="plus" /></FramedButton>
                <FramedButton aria-label="Copy"><Icon name="copy" /></FramedButton>
              </FolderButtons>
            </Half>
            <Half>
              <PaneHeader $h={22}><PaneTitle>Projects</PaneTitle></PaneHeader>
              <ListBox><Tree /></ListBox>
            </Half>
          </Split>
          <Split $cols="161px minmax(0, 1fr)">
            <Half>
              <PaneHeader $h={22}><PaneTitle>Details</PaneTitle></PaneHeader>
              <DetailsBox>
                <DetailsText>
                  <DetailLine $strong>TEST</DetailLine>
                  <DetailLine>Modified:</DetailLine>
                  <DetailLine $wrap>2025/9/8 ¤W¤È 01:04:22</DetailLine>
                  <DetailLine>Created: 2025/9/8</DetailLine>
                </DetailsText>
                <ScrollTrack><ScrollThumb /></ScrollTrack>
              </DetailsBox>
            </Half>
            <Half>
              <PaneHeader $h={22}><PaneTitle>Preview</PaneTitle></PaneHeader>
              <PreviewBox />
            </Half>
          </Split>
          <PaneHeader $top={5} $h={22}><PaneTitle>Toolbar</PaneTitle></PaneHeader>
          <BrowserTools>
            {tools("gear refresh folderOk !folderDash pBox newPlan folderPage history")}
          </BrowserTools>
        </Column>

        <SideStrip>
          <SideGroup>
            <SideGrip />
            {tools("!books !optionList !layerCheck")}
          </SideGroup>
          <SideGroup>
            <SideGrip />
            {tools("zoomWin zoomIn zoomOut fitOne fitDots fitBox fitAll hand")}
          </SideGroup>
          <SideGroup>
            <SideGrip />
            {tools("layers !crossHair !colorHouse refreshView sheet pageZoom !textArrow !snapLine arcs !zy !gridBlue !gridSnap !objSnap")}
            <SmallButton aria-label="More tools">
              <Svg $size={8} viewBox="0 0 8 8" fill="none"><path d="M2 1l2 2 2-2M2 4l2 2 2-2" stroke="#222" strokeWidth="1.300" /></Svg>
            </SmallButton>
          </SideGroup>
        </SideStrip>
      </Workspace>

      <BottomBar><Grip as="div" $first /></BottomBar>
      <StatusBar>
        <Status $first $w={415}>Click on any object to select it for moving, resizing, or del...</Status>
        <Status $w={154}>Select Objects [Spa...</Status>
        <Status $w={67}>Floor: 1</Status>
        <Status $w={172}>Object Layer: -</Status>
        <Status $w={172}>Drawing Group: -</Status>
        <Status $w={200}>X: 8251 mm, Y: 13312 m...</Status>
        <Status $last>811 x 615</Status>
        <SizeGrip />
      </StatusBar>
    </Shell>
  );
}
